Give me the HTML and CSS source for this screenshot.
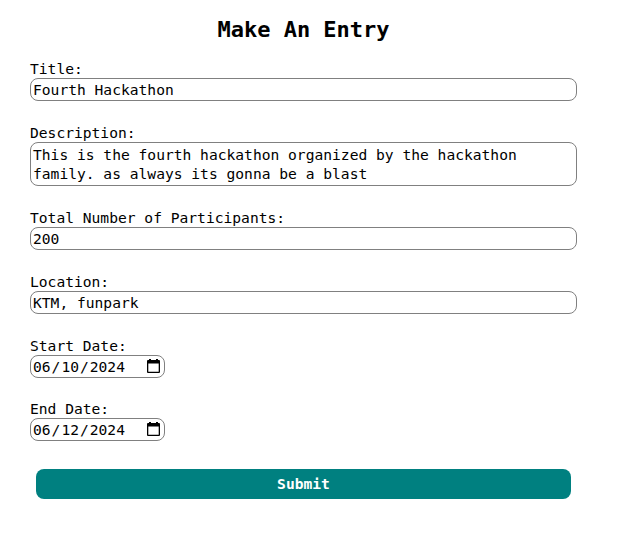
FILE: index.html
```html
<!DOCTYPE html>
<html lang="en"><head><meta charset="utf-8"><title>Make An Entry</title><link rel="stylesheet" href="styles.css"></head>
<body>
<form class="entry">
<h2 class="heading">Make An Entry</h2>
<label class="label" for="title">Title:</label>
<input class="field" id="title" value="Fourth Hackathon" spellcheck="false">
<label class="label" for="desc">Description:</label>
<textarea class="field area" id="desc" spellcheck="false">This is the fourth hackathon organized by the hackathon family. as always its gonna be a blast</textarea>
<label class="label" for="total">Total Number of Participants:</label>
<input class="field" id="total" value="200">
<label class="label" for="location">Location:</label>
<input class="field" id="location" value="KTM, funpark" spellcheck="false">
<div class="label">Start Date:</div>
<div class="field date"><span>06<span class="slash">/</span>10<span class="slash">/</span>2024</span><svg class="calendar" viewBox="0 0 13 14"><path d="M2 0h2v1h5V0h2v1h1q1 0 1 1v11q0 1-1 1H1q-1 0-1-1V2q0-1 1-1h1zM1.3 4.5v8.2h10.4V4.5z" fill-rule="evenodd"/></svg></div>
<div class="label">End Date:</div>
<div class="field date last"><span>06<span class="slash">/</span>12<span class="slash">/</span>2024</span><svg class="calendar" viewBox="0 0 13 14"><path d="M2 0h2v1h5V0h2v1h1q1 0 1 1v11q0 1-1 1H1q-1 0-1-1V2q0-1 1-1h1zM1.3 4.5v8.2h10.4V4.5z" fill-rule="evenodd"/></svg></div>
<button class="submit" type="button">Submit</button>
</form>
</body></html>
```
FILE: styles.css
```css
* { box-sizing: border-box; }
body { margin: 0; background: #fff; color: #000; font: 14.62px/19px "DejaVu Sans Mono", monospace; }
.entry { display: flex; flex-direction: column; width: 547px; margin-left: 30px; padding-top: 15px; }
.heading { margin: 0 0 16px; font-size: 22px; line-height: 29px; text-align: center; }
.label { height: 18px; line-height: 18px; }
.field { width: 547px; height: 23px; margin: 0 0 23px; padding: 1px 2px; border: 1px solid #808080; border-radius: 8px; background: #fff; color: #000; font: inherit; outline: 0; }
.area { height: 44px; padding: 2px; resize: none; overflow: hidden; }
.date { display: flex; align-items: center; justify-content: space-between; width: 135px; margin-bottom: 22px; }
.slash { padding: 0 1px; }
.calendar { width: 13px; height: 14px; margin: 0 2px 1px 0; }
.last { margin-bottom: 28px; }
.submit { width: 535px; height: 30px; margin-left: 6px; padding: 0 0 1px; border: 0; border-radius: 8px; background: #008080; color: #fff; font: inherit; font-weight: 700; }
```
